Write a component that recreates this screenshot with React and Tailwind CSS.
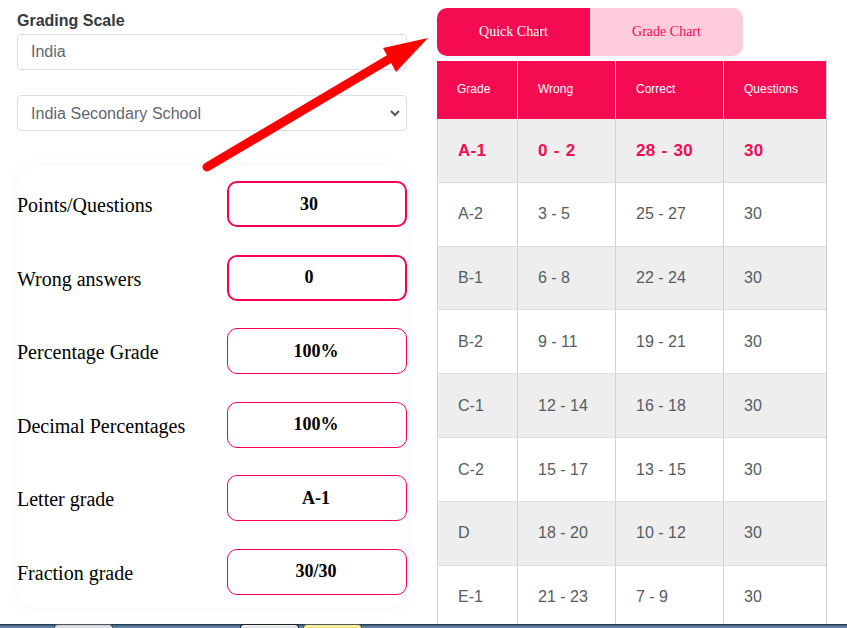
const serif = "font-['Liberation_Serif',serif]";
const rows = [
  ["A-1", "0 - 2", "28 - 30", "30"],
  ["A-2", "3 - 5", "25 - 27", "30"],
  ["B-1", "6 - 8", "22 - 24", "30"],
  ["B-2", "9 - 11", "19 - 21", "30"],
  ["C-1", "12 - 14", "16 - 18", "30"],
  ["C-2", "15 - 17", "13 - 15", "30"],
  ["D", "18 - 20", "10 - 12", "30"],
  ["E-1", "21 - 23", "7 - 9", "30"],
];
const fields = [
  ["Points/Questions", "30", true],
  ["Wrong answers", "0", true],
  ["Percentage Grade", "100%", false],
  ["Decimal Percentages", "100%", false],
  ["Letter grade", "A-1", false],
  ["Fraction grade", "30/30", false],
];
const cols = "grid grid-cols-[80px_98px_108px_103px]";

export default function App() {
  return (
    <div className="relative h-[628px] w-[847px] overflow-hidden bg-white font-['Liberation_Sans',sans-serif]">
      <div className="flex h-[616px] items-start">
        <div className="ml-[17px] w-[390px] shrink-0">
          <div className="mt-[11px] h-[23px] text-base leading-[19px] font-bold text-[#343a40]">Grading Scale</div>
          <div className="flex h-[36px] items-center rounded border border-[#dddde6] px-[13px] text-base text-[#5f666d]">India</div>
          <div className="mt-[25px] flex h-[36px] items-center justify-between rounded border border-[#dddde6] pr-[6px] pl-[13px] text-base tracking-[0.05px] text-[#5f666d]">
            <span className="pt-[2px]">India Secondary School</span>
            <svg width="10" height="8" viewBox="0 0 10 8" fill="none" stroke="#555" strokeWidth="2"><path d="M1 2l4 4 4-4" /></svg>
          </div>
          <div className={`mt-[35px] flex h-[442px] flex-col justify-between rounded-[20px] pt-[15px] pb-[13px] shadow-[0_0_16px_rgba(0,0,0,0.04)] ${serif}`}>
            {fields.map(([label, value, thick]) => (
              <div key={label} className="flex items-center justify-between">
                <span className="pt-[2px] text-[20px] text-black">{label}</span>
                <div className={`flex h-[46px] w-[180px] items-center justify-center rounded-[10px] border-[#f6004f] text-[18px] font-bold text-black ${thick ? "border-2 pr-4" : "border pr-[2px]"}`}>{value}</div>
              </div>
            ))}
          </div>
        </div>
        <div className="ml-[30px] w-[390px] shrink-0">
          <div className={`mt-[8px] flex h-[48px] w-[306px] text-sm ${serif}`}>
            <div className="relative flex w-[153px] items-center justify-center rounded-l-[10px] bg-[#f40b52] text-white">
              Quick Chart
              <span className="absolute top-[17px] left-[102px] h-[14px] w-px bg-black"></span>
            </div>
            <div className="flex w-[153px] items-center justify-center rounded-r-[10px] bg-[#ffccdc] text-[#f40b52]">Grade Chart</div>
          </div>
          <div className="mt-[5px] border-r border-[#d2d2d6] text-base text-[#555c63]">
            <div className={`${cols} h-[58px] bg-[#f40b52] text-xs font-medium text-white`}>
              {["Grade", "Wrong", "Correct", "Questions"].map((h, i) => (
                <div key={h} className={`flex items-center pb-[3px] pl-5 ${i ? "border-l border-[#ffd5e2]" : ""}`}>{h}</div>
              ))}
            </div>
            {rows.map((r, i) => (
              <div key={r[0]} className={`${cols} h-[63.83px] border-b border-[#dcdce2] ${i % 2 === 0 ? "bg-[#eeeeee]" : "bg-white"} ${i === 0 ? "text-[17px] font-bold text-[#f40b52]" : ""}`}>
                {r.map((c, j) => (
                  <div key={j} className={`flex items-center border-l border-[#d2d2d6] pl-5 ${i === 0 ? "tracking-[0.3px] [word-spacing:1px]" : ""}`}>{c}</div>
                ))}
              </div>
            ))}
          </div>
        </div>
      </div>
      <svg className="pointer-events-none absolute top-0 left-0" width="847" height="628" fill="none">
        <path d="M207 167L396 55" stroke="#ff0000" strokeWidth="9" strokeLinecap="round" />
        <path d="M428 38L383 48L396 72Z" fill="#ff0000" />
      </svg>
      <div className="absolute bottom-0 left-0 flex h-[4px] w-full items-end border-t border-[#24384c] bg-gradient-to-b from-[#3e5f80] to-[#6f93b4]">
        <div className="ml-[54px] h-[4px] w-[59px] rounded-t-sm border border-b-0 border-[#555] bg-gradient-to-b from-[#c8d0d8] to-[#e4e8ec]"></div>
        <div className="ml-[127px] h-[4px] w-[59px] rounded-t-sm border border-b-0 border-[#222] bg-gradient-to-b from-[#f0f2f5] to-[#d8dee4]"></div>
        <div className="ml-[4px] h-[4px] w-[59px] rounded-t-sm border border-b-0 border-[#555] bg-gradient-to-b from-[#f7f2b0] to-[#f0e67c]"></div>
      </div>
    </div>
  );
}
